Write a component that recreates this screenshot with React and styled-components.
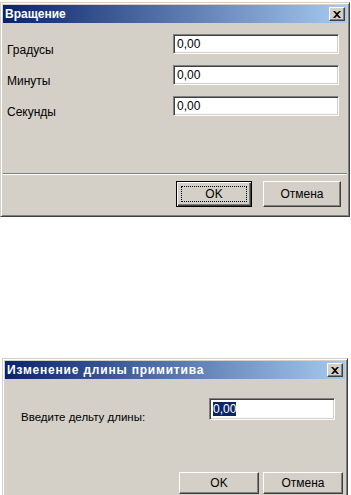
import React from "react";
import styled, { createGlobalStyle } from "styled-components";

const GlobalStyle = createGlobalStyle`
  html, body {
    margin: 0;
    padding: 0;
    background: #ffffff;
  }
  body {
    font-family: "Liberation Sans", Arial, sans-serif;
    font-size: 12px;
    color: #000000;
  }
`;

const Page = styled.div`
  display: flex;
  flex-direction: column;
  align-items: flex-start;
  padding-top: 2px;
  gap: 141px;
  height: 495px;
  overflow: hidden;
`;

const Window = styled.div`
  box-sizing: border-box;
  width: ${(p) => p.width}px;
  margin-left: ${(p) => p.offset || 0}px;
  background: #d4d0c8;
  border: 1px solid;
  border-color: #d4d0c8 #404040 #404040 #d4d0c8;
  box-shadow: inset 1px 1px #ffffff, inset -1px -1px #808080;
  padding: 2px;
  display: flex;
  flex-direction: column;
`;

const TitleBar = styled.div`
  height: 18px;
  display: flex;
  align-items: center;
  justify-content: space-between;
  padding: 0 2px 0 2px;
  background: linear-gradient(to right, #0a246a, #a6caf0);
`;

const TitleText = styled.span`
  color: #ffffff;
  font-weight: bold;
  font-size: 12px;
  letter-spacing: ${(p) => p.spacing || 0}px;
`;

const CloseButton = styled.div`
  box-sizing: border-box;
  width: 16px;
  height: 14px;
  background: #d4d0c8;
  border: 1px solid;
  border-color: #ffffff #404040 #404040 #ffffff;
  box-shadow: inset -1px -1px #808080;
  display: flex;
  align-items: center;
  justify-content: center;
`;

const Body = styled.div`
  height: ${(p) => p.height}px;
  box-sizing: border-box;
  padding: ${(p) => p.pad};
  display: flex;
  flex-direction: column;
  gap: 11px;
`;

const Row = styled.div`
  height: ${(p) => p.height || 20}px;
  display: flex;
  align-items: flex-start;
  justify-content: space-between;
`;

const Label = styled.span`
  font-size: ${(p) => p.size || 12}px;
  line-height: 14px;
  color: #000000;
  margin-top: ${(p) => p.drop || 9}px;
`;

const Field = styled.div`
  box-sizing: border-box;
  width: ${(p) => p.width}px;
  height: ${(p) => p.height || 20}px;
  background: #ffffff;
  border: 1px solid;
  border-color: #808080 #ffffff #ffffff #808080;
  box-shadow: inset 1px 1px #404040, inset -1px -1px #d4d0c8;
  display: flex;
  align-items: center;
  padding-left: 3px;
  font-size: 12px;
`;

const Selected = styled.span`
  background: #0a246a;
  color: #ffffff;
  line-height: 14px;
`;

const Separator = styled.div`
  height: 1px;
  background: #808080;
  border-bottom: 1px solid #ffffff;
`;

const Footer = styled.div`
  display: flex;
  justify-content: flex-end;
  gap: ${(p) => p.gap}px;
  padding: ${(p) => p.pad};
`;

const Button = styled.div`
  box-sizing: border-box;
  width: ${(p) => p.width}px;
  height: ${(p) => p.height}px;
  background: #d4d0c8;
  border: 1px solid;
  border-color: ${(p) =>
    p.primary ? "#000000" : "#ffffff #404040 #404040 #ffffff"};
  box-shadow: ${(p) =>
    p.primary
      ? "inset 1px 1px #ffffff, inset -1px -1px #404040, inset -2px -2px #808080"
      : "inset -1px -1px #808080"};
  display: flex;
  align-items: center;
  justify-content: center;
  font-size: 12px;
  position: relative;
`;

const FocusRing = styled.div`
  position: absolute;
  inset: 4px;
  border: 1px dotted #000000;
`;

const CloseIcon = () => (
  <svg width="8" height="7" viewBox="0 0 8 7">
    <path d="M0 0h2l2 2 2-2h2L5 3.5 8 7H6L4 5 2 7H0l3-3.5z" fill="#000" />
  </svg>
);

const rotationFields = ["Градусы", "Минуты", "Секунды"];

export default function App() {
  return (
    <>
      <GlobalStyle />
      <Page>
        <Window width={350}>
          <TitleBar>
            <TitleText>Вращение</TitleText>
            <CloseButton>
              <CloseIcon />
            </CloseButton>
          </TitleBar>
          <Body height={150} pad="11px 8px 0 4px">
            {rotationFields.map((name) => (
              <Row key={name}>
                <Label>{name}</Label>
                <Field width={166}>0,00</Field>
              </Row>
            ))}
          </Body>
          <Separator />
          <Footer gap={11} pad="6px 6px 7px 0">
            <Button primary width={76} height={26}>
              <FocusRing />
              OK
            </Button>
            <Button width={78} height={26}>
              Отмена
            </Button>
          </Footer>
        </Window>

        <Window width={346} offset={2}>
          <TitleBar>
            <TitleText spacing={0.8}>Изменение длины примитива</TitleText>
            <CloseButton>
              <CloseIcon />
            </CloseButton>
          </TitleBar>
          <Body height={93} pad="19px 10px 0 16px">
            <Row height={22}>
              <Label size={11.5} drop={12}>
                Введите дельту длины:
              </Label>
              <Field width={126} height={22}>
                <Selected>0,00</Selected>
              </Field>
            </Row>
          </Body>
          <Footer gap={4} pad="0 2px 6px 0">
            <Button width={80} height={22}>
              OK
            </Button>
            <Button width={80} height={22}>
              Отмена
            </Button>
          </Footer>
        </Window>
      </Page>
    </>
  );
}
